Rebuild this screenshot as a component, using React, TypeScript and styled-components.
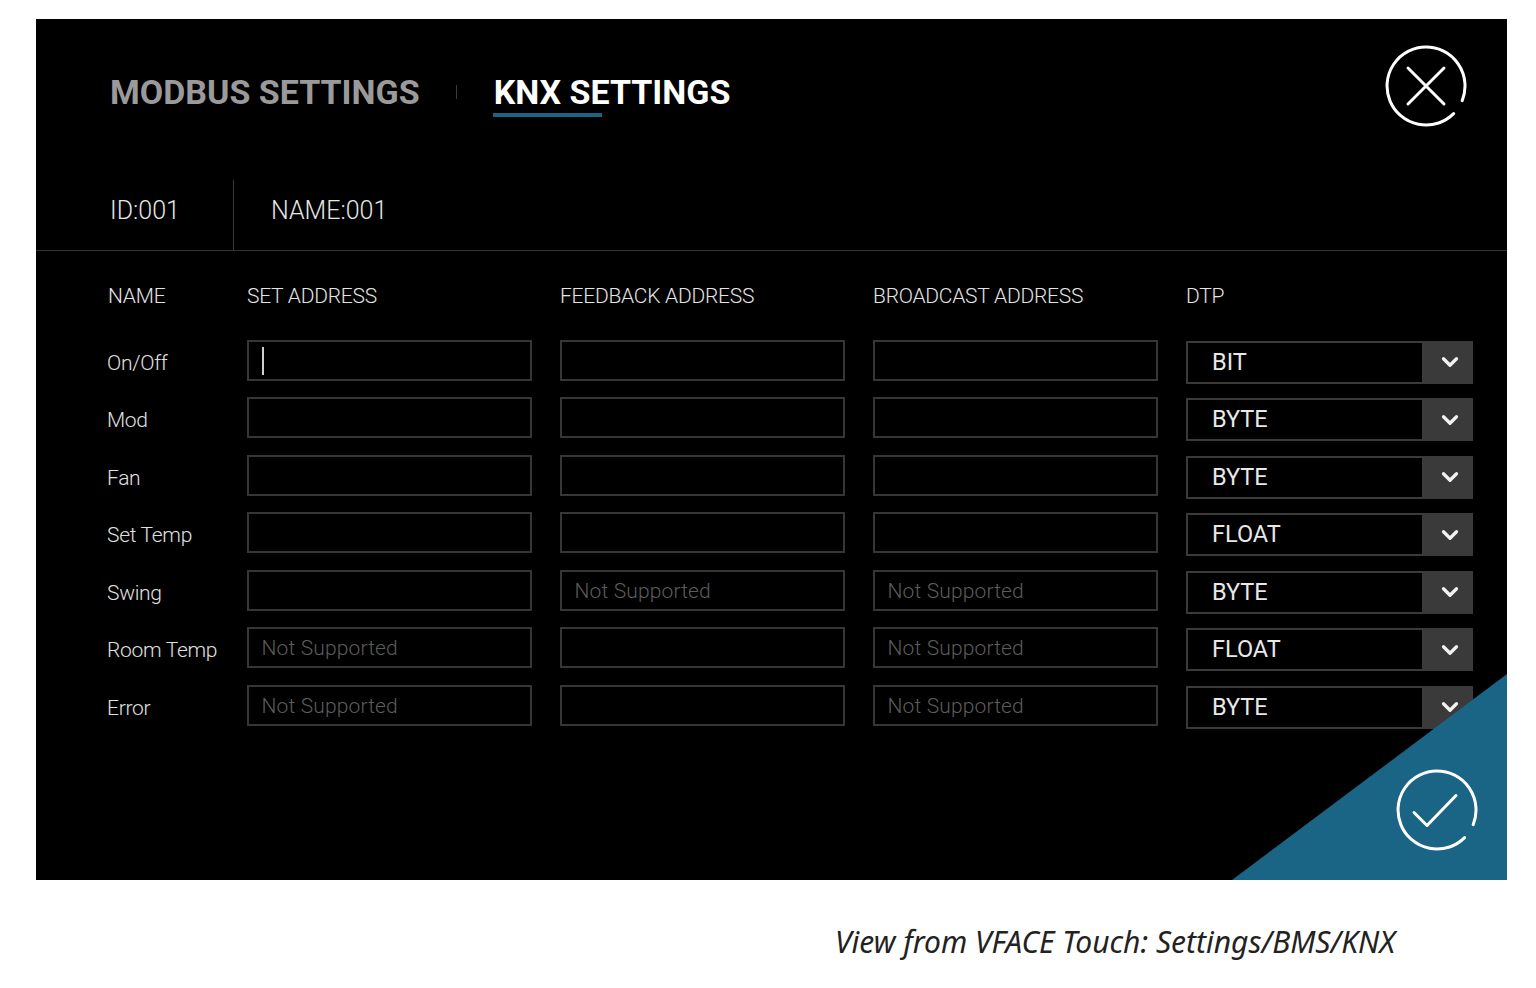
import React from "react";
import styled, { createGlobalStyle } from "styled-components";
import { ChevronDown } from "lucide-react";

const FONT = `Roboto, "Liberation Sans", sans-serif`;

const GlobalStyle = createGlobalStyle`
  html, body {
    margin: 0;
    background: #fff;
  }
`;

const Page = styled.div`
  width: 1536px;
  height: 988px;
  padding: 19px 0 0 36px;
  box-sizing: border-box;
  overflow: hidden;
`;

const Panel = styled.div`
  position: relative;
  width: 1471px;
  height: 861px;
  background: #000;
  font-family: ${FONT};
  overflow: hidden;
`;

const TopBar = styled.div`
  display: flex;
  justify-content: space-between;
  align-items: flex-start;
  height: 161px;
  box-sizing: border-box;
  padding: 26px 40px 0 74px;
`;

const Tabs = styled.div`
  display: flex;
  align-items: center;
  margin-top: 27px;
`;

const Tab = styled.div<{ $active?: boolean }>`
  position: relative;
  font-size: 34px;
  line-height: 40px;
  font-weight: 700;
  color: ${props => (props.$active ? "#fff" : "#9a9a9a")};

  ${props =>
    props.$active &&
    `&::after {
      content: "";
      position: absolute;
      left: -1px;
      top: 41px;
      width: 109px;
      height: 4px;
      background: #1a6485;
    }`}
`;

const TabDivider = styled.div`
  width: 1px;
  height: 14px;
  margin: 0 37px 0 36px;
  background: #3a3a3a;
`;

const IconButton = styled.div`
  width: 82px;
  height: 82px;
  color: #fff;
`;

const InfoRow = styled.div`
  display: flex;
  height: 71px;
  box-sizing: border-box;
  border-bottom: 1px solid #333;
`;

const InfoCell = styled.div<{ $first?: boolean }>`
  width: ${props => (props.$first ? "198px" : "auto")};
  box-sizing: border-box;
  padding-left: ${props => (props.$first ? "74px" : "37px")};
  border-right: ${props => (props.$first ? "1px solid #3a3a3a" : "none")};
  font-size: 25px;
  font-weight: 300;
  line-height: 62px;
  color: #e6e6e6;
`;

const Table = styled.div`
  display: grid;
  grid-template-columns: 112px 285px 285px 285px 287px;
  grid-template-rows: 70.5px;
  grid-auto-rows: 57.5px;
  column-gap: 28px;
  padding: 18px 0 0 71px;
`;

const HeaderCell = styled.div<{ $name?: boolean }>`
  font-size: 21px;
  line-height: 55px;
  font-weight: 300;
  letter-spacing: -0.25px;
  color: #e4e4e4;
  margin-left: ${props => (props.$name ? "1px" : "0")};
  white-space: nowrap;
`;

const RowLabel = styled.div`
  font-size: 21px;
  line-height: 46px;
  font-weight: 300;
  letter-spacing: -0.3px;
  color: #e0e0e0;
  white-space: nowrap;
`;

const Field = styled.div`
  position: relative;
  height: 41px;
  box-sizing: border-box;
  border: 2px solid #363636;
  padding-left: 12.5px;
  font-size: 21px;
  line-height: 39px;
  font-weight: 300;
  letter-spacing: 0.15px;
  color: #5c5c5c;
  white-space: nowrap;
`;

const Caret = styled.span`
  position: absolute;
  left: 13px;
  top: 5px;
  width: 2px;
  height: 28px;
  background: #cfcfcf;
`;

const Select = styled.div`
  display: flex;
  justify-content: space-between;
  height: 43px;
  margin-top: 1px;
  box-sizing: border-box;
  border: 2px solid #3a3a3a;
  padding-left: 24px;
  font-size: 23.5px;
  line-height: 39px;
  color: #e8e8e8;
`;

const Arrow = styled.div`
  display: flex;
  align-items: center;
  justify-content: center;
  width: 49px;
  box-sizing: border-box;
  padding-left: 6px;
  background: #3a3a3a;
  color: #f2f2f2;
`;

const ConfirmCorner = styled.div`
  position: absolute;
  right: 0;
  bottom: 0;
  width: 275px;
  height: 206px;
  display: flex;
  justify-content: flex-end;
  align-items: flex-end;
  padding: 0 29px 29px 0;
  box-sizing: border-box;
  background: #1a6485;
  clip-path: polygon(100% 0, 100% 100%, 0 100%);
`;

const Caption = styled.div`
  margin: 42px 0 0 799px;
  font-family: "Noto Sans", "Open Sans", sans-serif;
  font-style: italic;
  font-size: 30px;
  line-height: 40px;
  color: #222;
  white-space: nowrap;
`;

const Ring = () => (
  <path d="M68.6 68.6A39 39 0 1 1 77.2 55.6" fill="none" stroke="currentColor" strokeWidth="3" strokeLinecap="round" />
);

const CloseIcon = () => (
  <svg width="82" height="82" viewBox="0 0 82 82">
    <Ring />
    <path d="M23 23L59 59M59 23L23 59" fill="none" stroke="currentColor" strokeWidth="3" strokeLinecap="round" />
  </svg>
);

const CheckIcon = () => (
  <svg width="82" height="82" viewBox="0 0 82 82">
    <Ring />
    <path d="M18 43.5L31 56.5L60 26.5" fill="none" stroke="currentColor" strokeWidth="3" strokeLinecap="round" strokeLinejoin="round" />
  </svg>
);

type Row = {
  name: string;
  set?: string;
  feedback?: string;
  broadcast?: string;
  dtp: string;
  focused?: boolean;
};

const NS = "Not Supported";

const ROWS: Row[] = [
  { name: "On/Off", dtp: "BIT", focused: true },
  { name: "Mod", dtp: "BYTE" },
  { name: "Fan", dtp: "BYTE" },
  { name: "Set Temp", dtp: "FLOAT" },
  { name: "Swing", feedback: NS, broadcast: NS, dtp: "BYTE" },
  { name: "Room Temp", set: NS, broadcast: NS, dtp: "FLOAT" },
  { name: "Error", set: NS, broadcast: NS, dtp: "BYTE" },
];

const COLUMNS = ["NAME", "SET ADDRESS", "FEEDBACK ADDRESS", "BROADCAST ADDRESS", "DTP"];

export default function App() {
  return (
    <Page>
      <GlobalStyle />
      <Panel>
        <TopBar>
          <Tabs>
            <Tab>MODBUS SETTINGS</Tab>
            <TabDivider />
            <Tab $active>KNX SETTINGS</Tab>
          </Tabs>
          <IconButton>
            <CloseIcon />
          </IconButton>
        </TopBar>
        <InfoRow>
          <InfoCell $first>ID:001</InfoCell>
          <InfoCell>NAME:001</InfoCell>
        </InfoRow>
        <Table>
          {COLUMNS.map(col => (
            <HeaderCell key={col} $name={col === "NAME"}>
              {col}
            </HeaderCell>
          ))}
          {ROWS.map(row => (
            <React.Fragment key={row.name}>
              <RowLabel>{row.name}</RowLabel>
              <Field>
                {row.focused && <Caret />}
                {row.set}
              </Field>
              <Field>{row.feedback}</Field>
              <Field>{row.broadcast}</Field>
              <Select>
                {row.dtp}
                <Arrow>
                  <ChevronDown size={26} strokeWidth={3} />
                </Arrow>
              </Select>
            </React.Fragment>
          ))}
        </Table>
        <ConfirmCorner>
          <IconButton>
            <CheckIcon />
          </IconButton>
        </ConfirmCorner>
      </Panel>
      <Caption>View from VFACE Touch: Settings/BMS/KNX</Caption>
    </Page>
  );
}
